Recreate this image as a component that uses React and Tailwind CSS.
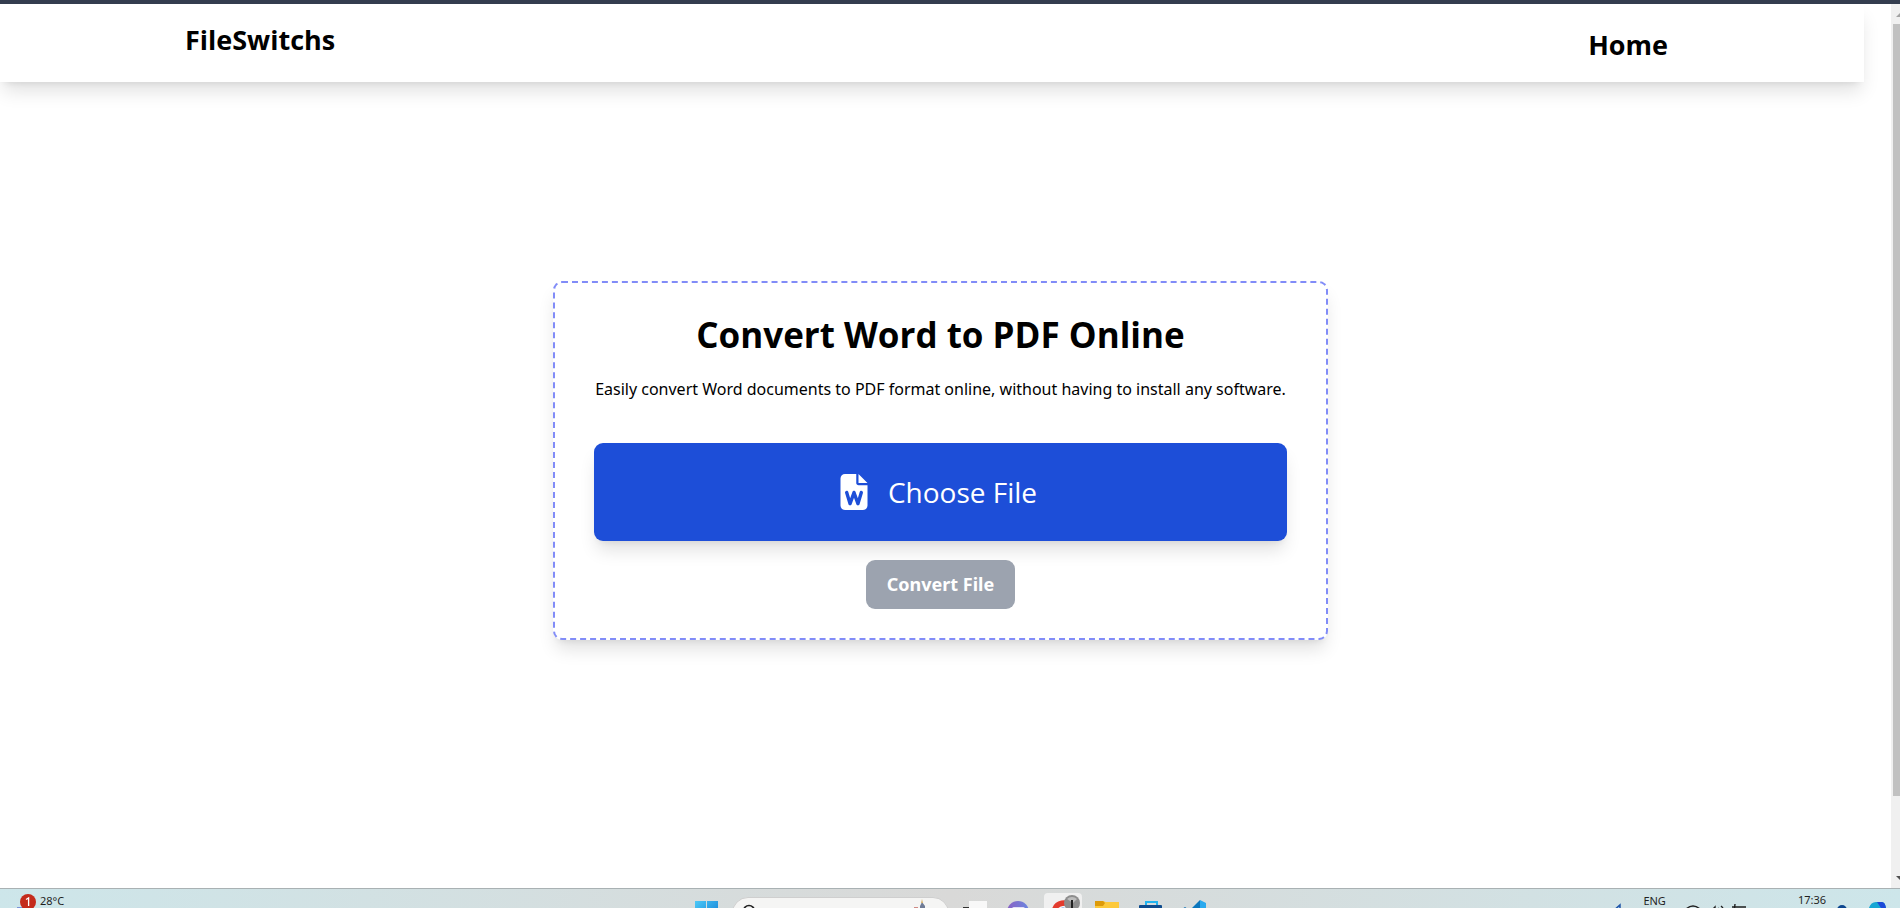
import { useRef } from 'react';
import { FaFileWord } from 'react-icons/fa6';

// =============================================
// NAVBAR
// =============================================
function Navbar() {
  return (
    <nav className="mr-[27px] flex h-[78px] items-start justify-between bg-white pt-4 pr-[196px] pl-[185px] font-['Open_Sans','Noto_Sans',sans-serif] text-[27px] leading-10 font-bold shadow-[0_12px_18px_-3px_rgb(0_0_0/0.12),0_5px_7px_-5px_rgb(0_0_0/0.1)]">
      <a href="#inicio">FileSwitchs</a>
      <a href="#home" className="pt-[5px]">Home</a>
    </nav>
  );
}

// =============================================
// CONVERTER CARD
// =============================================
function ConverterCard() {
  const fileInput = useRef(null);

  return (
    <section className="flex w-[775px] flex-col items-center rounded-[9px] border-2 border-dashed border-[#818cf8] bg-white px-[39px] pt-7 pb-[29px] shadow-[0_12px_18px_-3px_rgb(0_0_0/0.12),0_5px_7px_-5px_rgb(0_0_0/0.1)]">
      <h1 className="font-['Open_Sans','Noto_Sans',sans-serif] text-[35px] leading-12 font-bold whitespace-nowrap">Convert Word to PDF Online</h1>
      <p className="mt-4 text-[16px] leading-7 whitespace-nowrap">
        Easily convert Word documents to PDF format online, without having to install any software.
      </p>
      <input ref={fileInput} type="file" accept=".doc,.docx" aria-label="Choose File" className="hidden" />
      <button
        type="button"
        onClick={() => fileInput.current.click()}
        className="mt-10 flex h-[98px] w-full items-center justify-center gap-4 rounded-[9px] bg-[#1d4ed8] pr-2 font-['Open_Sans','Noto_Sans',sans-serif] text-[28px] text-white shadow-[0_12px_18px_-3px_rgb(0_0_0/0.12),0_5px_7px_-5px_rgb(0_0_0/0.1)]"
      >
        <FaFileWord className="size-9" />
        Choose File
      </button>
      <button type="button" className="mt-[19px] h-[49px] w-[149px] rounded-[9px] bg-[#9ca3af] text-[18px] font-bold text-white">
        Convert File
      </button>
    </section>
  );
}

function Scrollbar() {
  return (
    <div className="flex w-[9px] flex-col bg-[#f0f0f0]">
      <svg className="h-5 w-full" viewBox="0 0 9 20">
        <path d="M5 13 L9 9 V13 Z" fill="#a3a3a3" />
      </svg>
      <div className="ml-0.5 h-[772px] bg-[#c1c1c1]" />
      <div className="flex-1" />
      <svg className="h-5 w-full" viewBox="0 0 9 20">
        <path d="M5 8 H9 V12 Z" fill="#505050" />
      </svg>
    </div>
  );
}

// =============================================
// TASKBAR
// =============================================
function TaskIcon({ label, children }) {
  return (
    <button type="button" aria-label={label} className="h-[38px] w-11 shrink-0">
      <svg width="44" height="38" viewBox="0 0 44 38">{children}</svg>
    </button>
  );
}

function Taskbar() {
  return (
    <footer className="grid h-5 grid-cols-[1fr_auto_1fr] items-start overflow-hidden border-t border-[#a9b1b3] bg-linear-to-r from-[#cde6ea] via-[#d9d9d8] to-[#cde6ea] text-[11px] leading-4 text-[#1f1f1f]">
      <div className="flex gap-1 pl-4">
        <svg width="20" height="26" viewBox="0 -4 20 26">
          <rect x="1" y="14" width="14" height="8" fill="#7a93d8" />
          <circle cx="12" cy="9" r="8" fill="#c42b1c" />
          <path d="M10 6.5 L12.6 5 V13" fill="none" stroke="#fff" strokeWidth="1.3" />
        </svg>
        <span className="pt-1">28°C</span>
      </div>

      <div className="flex items-start">
        <TaskIcon label="Start">
          <defs>
            <linearGradient id="win" x1="0" y1="0" x2="1" y2="1">
              <stop offset="0" stopColor="#4cc9f7" />
              <stop offset="1" stopColor="#0a74d0" />
            </linearGradient>
          </defs>
          <path d="M11 12 H22 V23 H11 Z M23 12 H34 V23 H23 Z M11 24 H22 V35 H11 Z M23 24 H34 V35 H23 Z" fill="url(#win)" />
        </TaskIcon>
        <button type="button" aria-label="Search" className="mx-1 mt-2 h-8 w-[217px] rounded-full border border-[#cfcfcf] bg-[#f5f5f4]">
          <svg width="215" height="30" viewBox="0 0 215 30">
            <circle cx="16" cy="13" r="5.5" fill="none" stroke="#222" strokeWidth="1.6" />
            <circle cx="76" cy="11" r="0.8" fill="#333" />
            <path d="M187 14 V8 L189 4 L192 8 V14 Z" fill="#707c96" />
            <path d="M188 5 L189 1 L190 5 Z" fill="#d8b36c" />
            <path d="M181 11 V9 H185 V11 Z" fill="#cf8a84" />
          </svg>
        </button>
        <TaskIcon label="Task view">
          <rect x="10" y="18" width="17" height="12" fill="#333" />
          <rect x="16" y="12" width="18" height="14" fill="#f8f8f8" />
        </TaskIcon>
        <TaskIcon label="Chat">
          <defs>
            <linearGradient id="chat">
              <stop offset="0" stopColor="#8a62c4" />
              <stop offset="1" stopColor="#6a86e0" />
            </linearGradient>
          </defs>
          <circle cx="21" cy="23" r="11" fill="url(#chat)" />
          <rect x="15" y="18" width="13" height="9" rx="2" fill="#e3e0f5" />
        </TaskIcon>
        <TaskIcon label="Chrome">
          <rect x="3" y="4" width="38" height="40" rx="4" fill="#f0f0f0" />
          <path d="M11 20 A12 12 0 0 1 32 16 L22 17 L16 24 Z" fill="#e33b2e" />
          <circle cx="22" cy="23" r="6" fill="#f6f6f6" />
          <circle cx="22" cy="23" r="4.5" fill="#3b7ded" />
          <circle cx="31" cy="14" r="8" fill="#8d8d8d" />
          <path d="M26 10 A7 7 0 0 1 36 10 L32 14 Z" fill="#bdbdbd" />
          <path d="M31 11 V22" stroke="#222" strokeWidth="2" />
        </TaskIcon>
        <TaskIcon label="File Explorer">
          <path d="M10 12 H18 L21 13 H34 V30 H10 Z" fill="#fcc93c" />
          <path d="M10 12 H18 L20 14 L18 17 H10 Z" fill="#dd9a09" />
        </TaskIcon>
        <TaskIcon label="Store">
          <path d="M17 17 V13 H28 V17" fill="none" stroke="#21b4f0" strokeWidth="2" />
          <rect x="10" y="16" width="23" height="18" rx="1" fill="#0e4b8d" />
        </TaskIcon>
        <TaskIcon label="Visual Studio Code">
          <path d="M27 11 L33 14 V32 H27 Z" fill="#2aa9ee" />
          <path d="M27 11 V20 L15 31 L12 26 Z" fill="#0a77bd" />
          <path d="M9 20 L12 18 L22 25 L18 28 Z" fill="#0b6fb3" />
        </TaskIcon>
      </div>

      <div className="flex items-start justify-end pr-3">
        <svg className="mr-5" width="10" height="26" viewBox="0 0 10 26">
          <path d="M0 22 L7 16 V26" fill="#a8cdf0" stroke="#1f55a8" strokeWidth="1.5" />
        </svg>
        <span className="mr-5 pt-1">ENG</span>
        <svg className="mr-[52px]" width="60" height="26" viewBox="0 0 60 26" fill="none" stroke="#1f1f1f" strokeWidth="1.4">
          <path d="M0 20 Q7 14 14 20 M26 21 L29 18 V26 M32 19 Q34 21 32 25 M35 17 Q39 20 36 25 M50 18 H60 M46 18 H52 M49 15 L48 24" />
        </svg>
        <span className="mr-2.5 pt-[3px]">17:36</span>
        <svg className="mr-5" width="12" height="26" viewBox="0 0 12 26">
          <circle cx="6" cy="21" r="5" fill="#0d478f" />
        </svg>
        <svg width="20" height="30" viewBox="0 0 20 30">
          <path d="M0 24 Q1 13 8 13 H14 Q17 13 18 19 H10 Q7 19 6 26 Z" fill="#18a7d4" />
          <path d="M9 13 H14 Q17 13 18 19 H13 Z" fill="#1b49d8" />
          <path d="M11 19 H20 V26 H11 Z" fill="#b9a0ee" />
        </svg>
      </div>
    </footer>
  );
}

export default function App() {
  return (
    <div className="flex h-screen flex-col overflow-hidden bg-white font-['Noto_Sans','Open_Sans',sans-serif] text-black">
      <div className="h-1 bg-[#343d4f]" />
      <div className="flex min-h-0 flex-1">
        <div className="flex flex-1 flex-col overflow-hidden">
          <Navbar />
          <main className="flex flex-1 items-start justify-center pt-[199px] pr-[10px]">
            <ConverterCard />
          </main>
        </div>
        <Scrollbar />
      </div>
      <Taskbar />
    </div>
  );
}
